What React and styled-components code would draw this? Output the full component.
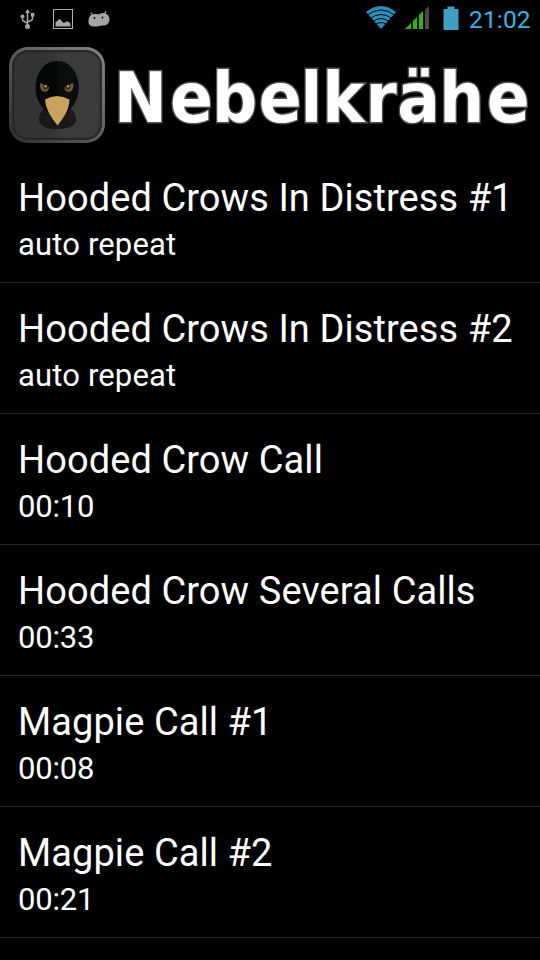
import React from 'react'
import styled, { createGlobalStyle } from 'styled-components'

const GlobalStyle = createGlobalStyle`
body{
  margin:0;
  background-color:#000;
}
`
const Main = styled.div`
display:flex;
flex-direction:column;
width:540px;
height:960px;
overflow:hidden;
background-color:#000;
color:#fff;
font-family:Roboto, sans-serif;
`
const StatusBar = styled.div`
display:flex;
flex-shrink:0;
justify-content:space-between;
height:38px;
svg{
  display:block;
}
`
const StatusRight = styled.div`
display:flex;
`
const Clock = styled.span`
width:73px;
padding-left:2px;
box-sizing:border-box;
font-size:24.5px;
line-height:40px;
letter-spacing:0.15px;
color:#33b5e5;
white-space:nowrap;
`
const Header = styled.div`
display:flex;
flex-shrink:0;
height:114px;
svg{
  display:block;
}
`
const Row = styled.div`
flex-shrink:0;
box-sizing:border-box;
height:131px;
padding:22px 0 0 18px;
border-bottom:1px solid #252525;
white-space:nowrap;
`
const Title = styled.div`
font-size:38px;
line-height:48px;
letter-spacing:0.08px;
`
const Detail = styled.div`
font-size:31px;
line-height:46px;
letter-spacing:${(props) => (props.$time ? '-0.2px' : '0.15px')};
`

const sounds = [
  { title: 'Hooded Crows In Distress #1', detail: 'auto repeat' },
  { title: 'Hooded Crows In Distress #2', detail: 'auto repeat' },
  { title: 'Hooded Crow Call', detail: '00:10', time: true },
  { title: 'Hooded Crow Several Calls', detail: '00:33', time: true },
  { title: 'Magpie Call #1', detail: '00:08', time: true },
  { title: 'Magpie Call #2', detail: '00:21', time: true },
]

const NotificationIcons = () => (
  <svg width="120" height="38" viewBox="0 0 120 38" fill="#a6a6a6">
    {/* usb */}
    <g stroke="#a6a6a6" fill="none" strokeWidth="1.5">
      <path d="M27.5 12V26M22.500 17v2.500q0 1.500 1.500 1.800l3.500 2M32.500 16v2.500q0 1.500-1.500 2l-3.500 1.500" />
    </g>
    <path d="M27.500 9l2.500 4h-5z" />
    <circle cx="22.500" cy="16.300" r="1.900" />
    <rect x="30.800" y="13" width="3.500" height="3.500" />
    <circle cx="27.500" cy="26.500" r="2.500" />
    {/* picture */}
    <rect x="53.500" y="9.500" width="19" height="19" fill="none" stroke="#b0b0b0" />
    <path d="M55.500 26.500v-4.500l2-1 1.500-2 1.500.5 2 2.500 1.500 1 2-1.500h2l1.500 1 1 1.500v2.500z" />
    {/* android head */}
    <path d="M91 12.500l2 3.500M106 11l-2 4" stroke="#a6a6a6" strokeWidth="1.200" />
    <path d="M88.500 22c0-4 1-7 4.500-7.800 2-.5 4 .2 6 0 2-.8 4-1.500 6-1 3 .7 4.700 3.500 4.500 6.500-.2 3.500-2.500 5.500-5.500 5.800-1.500 0-2.500.2-4 .2-2 .700-3.500 1-6 .800-3.500-.200-5.500-1.500-5.500-4.500z" />
    <circle cx="94.500" cy="18" r="0.900" fill="#000" />
    <circle cx="102.500" cy="17.500" r="0.900" fill="#000" />
  </svg>
)

const SystemIcons = () => (
  <svg width="107" height="38" viewBox="360 0 107 38">
    {/* wifi */}
    <path d="M366 12Q381 0 396 12L381 29z" fill="#2a8fbc" />
    <g fill="none" stroke="#000" strokeWidth="1">
      <path d="M367 15.200Q381 4.800 395 15.200" />
      <path d="M370 18.500Q381 10.500 392 18.500" />
      <path d="M373 21.500Q381 15.500 389 21.500" />
      <path d="M375.500 24.500Q381 20.500 386.500 24.500" />
    </g>
    {/* signal */}
    <path d="M405 29l6-6v6zM413 29v-8l4-4v12zM419 29v-14l4-4v18z" fill="#33b500" />
    <path d="M425 29V10l4-4v23z" fill="#4a4a4a" />
    {/* battery */}
    <path d="M443.500 9h4V6.500h7V9h4v21h-15z" fill="#429dc5" />
  </svg>
)

const CrowIcon = () => (
  <svg width="115" height="114" viewBox="0 38 115 114">
    <defs>
      <linearGradient id="rim" x1="0" y1="1" x2="1" y2="0">
        <stop offset="0" stopColor="#2e2e2e" />
        <stop offset="0.300" stopColor="#484848" />
        <stop offset="0.550" stopColor="#626262" />
        <stop offset="1" stopColor="#858585" />
      </linearGradient>
      <clipPath id="rightHalf">
        <rect x="57" y="50" width="50" height="90" />
      </clipPath>
    </defs>
    <rect x="9" y="47" width="96" height="96" rx="19" fill="url(#rim)" />
    <rect x="12" y="50" width="90" height="90" rx="16" fill="#282828" />
    <rect x="14.500" y="52.500" width="85" height="85" rx="13" fill="#343434" />
    <rect x="14.500" y="52.500" width="85" height="85" rx="13" fill="#3b3b3b" clipPath="url(#rightHalf)" />
    <path d="M57 103c-9 0-18 8-18 16.500 0 7 8 9.500 18 9.500s19-2.500 19-9.500C76 111 66 103 57 103z" fill="#191919" />
    <path d="M57 61c-13 0-21.500 12-21.500 27 0 14 8 24.500 21.500 28 13.500-3.500 21.500-14 21.500-28 0-15-8.500-27-21.500-27z" fill="#060808" />
    <path d="M57 61c13 0 21.500 12 21.500 27 0 14-8 24.500-21.500 28z" fill="#0c0e0e" />
    <path d="M40.500 83l8.500 4.200c0 3-1.800 4.500-4.300 4.500-3.500 0-5.400-4.500-4.200-8.700z" fill="#6d5f3e" />
    <path d="M73 83l-8.500 4.200c0 3 1.800 4.500 4.300 4.500 3.500 0 5.400-4.500 4.200-8.700z" fill="#6d5f3e" />
    <circle cx="45.500" cy="87" r="2.500" fill="#2c2819" />
    <circle cx="68" cy="87" r="2.500" fill="#2c2819" />
    <circle cx="45.500" cy="86.200" r="1.200" fill="#d09b20" />
    <circle cx="68" cy="86.200" r="1.200" fill="#d09b20" />
    <path d="M45 99.500q12-7 24.500 0c-.5 11-6.500 19-12 26-5.500-7-11.500-15-12.500-26z" fill="#cca25f" />
  </svg>
)

// slightly narrowed bold lettering, one x per letter
const Logo = () => (
  <svg width="425" height="114" viewBox="115 38 425 114">
    <text
      transform="scale(0.91 1)"
      x="125.300 186.800 232.900 284.300 330.200 354.100 401.600 436.600 482.600 534.800"
      y="122.200"
      fontFamily="DejaVu Sans, sans-serif"
      fontWeight="bold"
      fontSize="69.500"
      fill="#fff"
      stroke="#505050"
      strokeWidth="3"
      paintOrder="stroke"
    >
      Nebelkrähe
    </text>
  </svg>
)

const App = () => {
  return (
    <Main>
      <GlobalStyle />
      <StatusBar>
        <NotificationIcons />
        <StatusRight>
          <SystemIcons />
          <Clock>21:02</Clock>
        </StatusRight>
      </StatusBar>
      <Header>
        <CrowIcon />
        <Logo />
      </Header>
      {sounds.map((sound) => (
        <Row key={sound.title}>
          <Title>{sound.title}</Title>
          <Detail $time={sound.time}>{sound.detail}</Detail>
        </Row>
      ))}
    </Main>
  )
}

export default App
